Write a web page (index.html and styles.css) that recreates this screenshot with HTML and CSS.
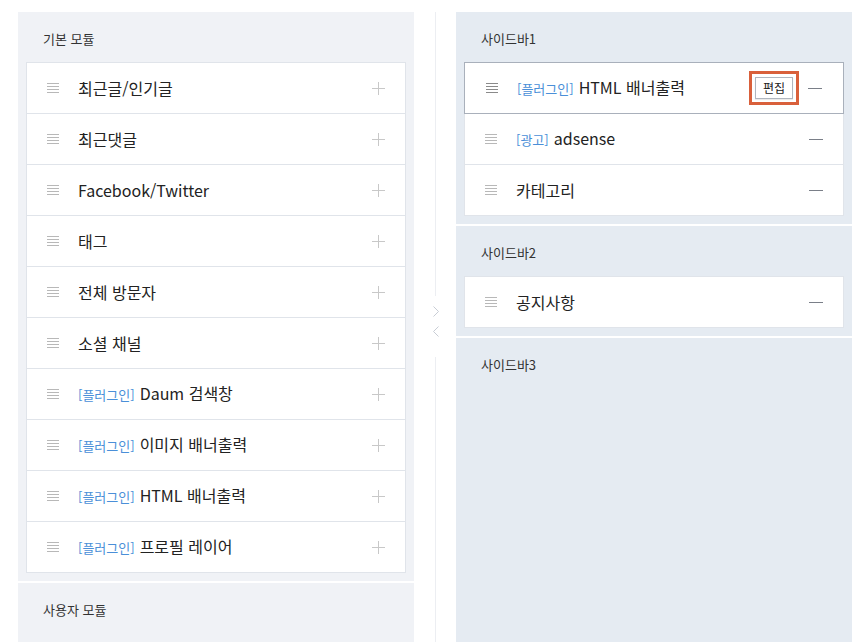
FILE: index.html
```html
<!DOCTYPE html>
<html lang="ko">
<head>
<meta charset="utf-8">
<title>사이드바 설정</title>
<link rel="stylesheet" href="styles.css">
</head>
<body>
<div class="layout">
  <div class="column">
    <section class="panel panel-left">
      <h2 class="panel-title">기본 모듈</h2>
      <ul class="card">
        <li class="row"><span class="drag"></span><span class="label">최근글/인기글</span><span class="plus"></span></li>
        <li class="row"><span class="drag"></span><span class="label">최근댓글</span><span class="plus"></span></li>
        <li class="row"><span class="drag"></span><span class="label">Facebook/Twitter</span><span class="plus"></span></li>
        <li class="row"><span class="drag"></span><span class="label">태그</span><span class="plus"></span></li>
        <li class="row"><span class="drag"></span><span class="label">전체 방문자</span><span class="plus"></span></li>
        <li class="row"><span class="drag"></span><span class="label">소셜 채널</span><span class="plus"></span></li>
        <li class="row"><span class="drag"></span><span class="label"><span class="tag">[플러그인]</span>Daum 검색창</span><span class="plus"></span></li>
        <li class="row"><span class="drag"></span><span class="label"><span class="tag">[플러그인]</span>이미지 배너출력</span><span class="plus"></span></li>
        <li class="row"><span class="drag"></span><span class="label"><span class="tag">[플러그인]</span>HTML 배너출력</span><span class="plus"></span></li>
        <li class="row"><span class="drag"></span><span class="label"><span class="tag">[플러그인]</span>프로필 레이어</span><span class="plus"></span></li>
      </ul>
    </section>
    <section class="panel panel-left panel-fill">
      <h2 class="panel-title">사용자 모듈</h2>
    </section>
  </div>

  <div class="divider">
    <div class="divider-line"></div>
    <div class="divider-arrows">
      <svg width="8" height="32" viewBox="0 0 8 32" aria-hidden="true">
        <polyline points="1.5,0.5 6.5,5.5 1.5,10.5" fill="none" stroke="#c8cdd5" stroke-width="1"/>
        <polyline points="6.5,20.5 1.5,25.5 6.5,30.5" fill="none" stroke="#c8cdd5" stroke-width="1"/>
      </svg>
    </div>
    <div class="divider-line divider-fill"></div>
  </div>

  <div class="column">
    <section class="panel panel-right">
      <h2 class="panel-title">사이드바1</h2>
      <ul class="card">
        <li class="row row-active"><span class="drag drag-dark"></span><span class="label"><span class="tag">[플러그인]</span>HTML 배너출력</span><span class="edit-wrap"><button class="edit">편집</button></span><span class="minus"></span></li>
        <li class="row"><span class="drag"></span><span class="label"><span class="tag">[광고]</span>adsense</span><span class="minus"></span></li>
        <li class="row"><span class="drag"></span><span class="label">카테고리</span><span class="minus"></span></li>
      </ul>
    </section>
    <section class="panel panel-right">
      <h2 class="panel-title">사이드바2</h2>
      <ul class="card">
        <li class="row"><span class="drag"></span><span class="label">공지사항</span><span class="minus"></span></li>
      </ul>
    </section>
    <section class="panel panel-right panel-fill">
      <h2 class="panel-title">사이드바3</h2>
    </section>
  </div>
</div>
</body>
</html>
```

FILE: styles.css
```css
* { box-sizing: border-box; }

html, body {
  margin: 0;
  padding: 0;
  background: #ffffff;
  height: 642px;
  overflow: hidden;
}

body {
  font-family: "Noto Sans CJK KR", "Noto Sans", sans-serif;
  color: #222;
}

.layout {
  display: flex;
  padding: 12px 0 0 18px;
  height: 642px;
}

.column {
  width: 396px;
  display: flex;
  flex-direction: column;
  gap: 2px;
}

.panel {
  padding: 0 8px 8px;
}

.panel-left { background: #f0f2f6; }
.panel-right { background: #e5ebf2; }
.panel-fill { flex: 1; }

.panel-title {
  margin: 0;
  height: 50px;
  padding: 17px 0 0 17px;
  font-size: 13px;
  line-height: 20px;
  font-weight: 400;
  color: #333;
}

.card {
  list-style: none;
  margin: 0;
  padding: 0;
  background: #fff;
  border: 1px solid #e0e4ea;
}

.row {
  height: 51px;
  display: flex;
  align-items: center;
  padding: 0 20px 0 20px;
  border-bottom: 1px solid #e0e4ea;
  background: #fff;
}

.row:last-child {
  border-bottom: 0;
  height: 50px;
}

.row-active {
  margin: -1px -1px 0 -1px;
  height: 52px;
  border: 1px solid #a9b0bb;
  padding: 0 21px 0 21px;
  position: relative;
}

.drag {
  width: 12px;
  height: 10px;
  flex: none;
  background: repeating-linear-gradient(to bottom, #b8b8b8 0, #b8b8b8 1px, transparent 1px, transparent 3px);
  margin-right: 19px;
}

.drag-dark {
  background: repeating-linear-gradient(to bottom, #8a8a8a 0, #8a8a8a 1px, transparent 1px, transparent 3px);
}

.label {
  flex: 1;
  font-size: 16px;
  line-height: 22px;
  color: #222;
  white-space: nowrap;
}

.tag {
  font-size: 13px;
  color: #4a8fd8;
  margin-right: 5px;
}

.plus {
  width: 13px;
  height: 13px;
  flex: none;
  background:
    linear-gradient(#c8c8c8, #c8c8c8) center / 13px 1px no-repeat,
    linear-gradient(#c8c8c8, #c8c8c8) center / 1px 13px no-repeat;
}

.minus {
  width: 14px;
  height: 1px;
  flex: none;
  background: #7a7f88;
}

.edit-wrap {
  flex: none;
  border: 3px solid #d9603b;
  padding: 3px;
  margin-right: 9px;
  display: flex;
}

.edit {
  width: 38px;
  height: 22px;
  padding: 0;
  border: 1px solid #b0b6bf;
  background: #fff;
  font-family: "Noto Sans CJK KR", "Noto Sans", sans-serif;
  font-size: 12px;
  line-height: 18px;
  color: #222;
  box-shadow: 0 1px 1px rgba(0, 0, 0, 0.08);
}

.divider {
  width: 42px;
  display: flex;
  flex-direction: column;
  align-items: center;
}

.divider-line {
  width: 1px;
  height: 284px;
  background: #eceef2;
}

.divider-fill { flex: 1; height: auto; }

.divider-arrows {
  height: 61px;
  padding-top: 10px;
  padding-left: 1px;
}

.divider-arrows svg { display: block; }
```
